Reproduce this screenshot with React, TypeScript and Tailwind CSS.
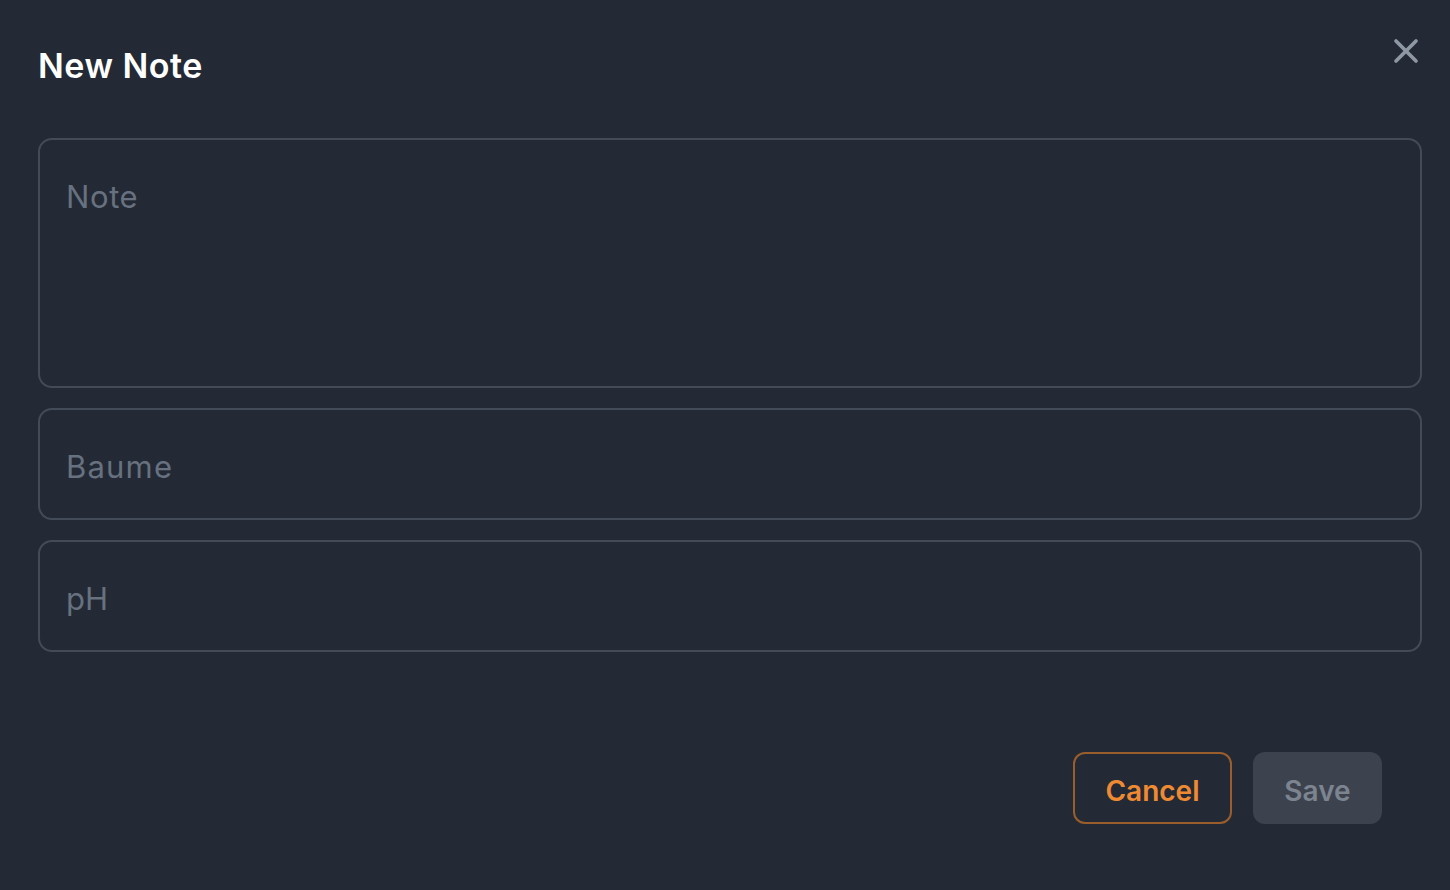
import { X } from 'lucide-react';

const fieldClass =
  'w-full rounded-[14px] border-2 border-[#444b58] bg-transparent px-[26px] text-[31px] text-[#c9d1d9] placeholder:text-[#67717f] outline-none';

export default function App(): JSX.Element {
  return (
    <div
      className="flex h-[890px] w-[1450px] flex-col bg-[#232a35] pl-[38px] pr-[28px]"
      style={{ fontFamily: 'Inter, "Liberation Sans", sans-serif' }}
    >
      <div className="flex h-[138px] items-start justify-between pt-[42px]">
        <h1 className="text-[34px] font-semibold leading-[48px] tracking-[0.5px] text-white">New Note</h1>
        <button className="-mr-[4px] mt-[-11px] text-[#8e97a4]">
          <X size={40} strokeWidth={2.2} />
        </button>
      </div>
      <div className="flex flex-col gap-[20px]">
        <textarea
          placeholder="Note"
          className={`${fieldClass} h-[250px] resize-none pt-[36px] leading-[42px] tracking-[0.6px]`}
        />
        <input placeholder="Baume" className={`${fieldClass} h-[112px] pt-[4px] tracking-[1.2px]`} />
        <input placeholder="pH" className={`${fieldClass} h-[112px] pt-[4px]`} />
      </div>
      <div className="mt-[100px] flex justify-end gap-[21px] pr-[40px]">
        <button className="h-[72px] w-[159px] rounded-[12px] border-2 border-[#9a5d2c] pt-[5px] text-[28px] font-semibold text-[#ef8a32]">
          Cancel
        </button>
        <button className="h-[72px] w-[129px] rounded-[12px] bg-[#3c424e] pt-[5px] text-[28px] font-semibold text-[#7c8490]">
          Save
        </button>
      </div>
    </div>
  );
}
